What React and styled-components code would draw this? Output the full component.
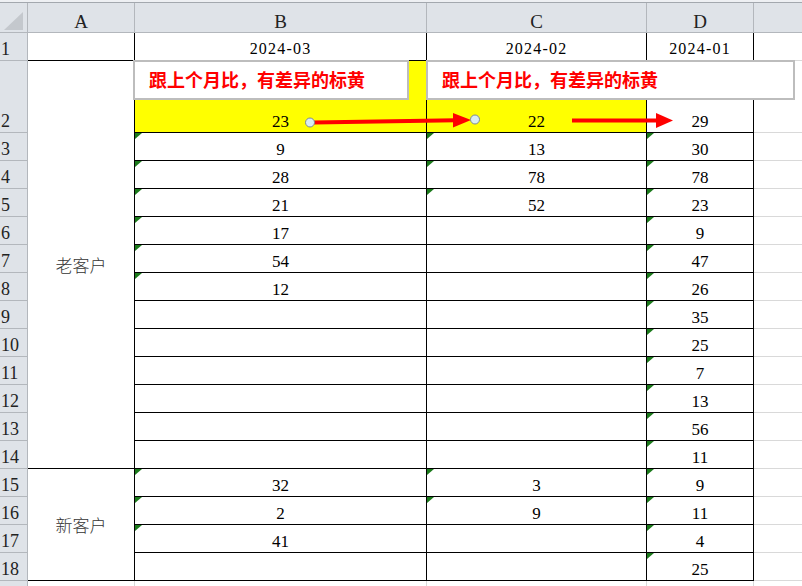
import React from 'react';
import styled, { createGlobalStyle, css } from 'styled-components';

const GlobalStyle = createGlobalStyle`
  html, body { margin: 0; padding: 0; background: #fff; overflow: hidden; }
  * { box-sizing: border-box; }
`;

const LINE = { black: '#000', grid: '#d9d9d9', head: '#b3b7bc' };
const HEAD_BG = '#dfe3e8';

const Sheet = styled.div`
  position: relative;
  width: 802px;
  height: 586px;
  overflow: hidden;
  background: #fff;
`;

const TopStrip = styled.div`
  height: 3px;
  background: #eef0f3;
  border-bottom: 1px solid #a3a8ae;
`;

const Grid = styled.div`
  display: grid;
  grid-template-columns: 28px 107px 292px 220px 107px 100px;
  grid-template-rows: 30px 28px 72px repeat(17, 28px);
`;

const ColHead = styled.div`
  position: relative;
  background: ${HEAD_BG};
  border-right: 1px solid ${LINE.head};
  border-bottom: 1px solid ${LINE.head};
  display: flex;
  justify-content: center;
  align-items: flex-end;
  font: 19px/20px "Liberation Serif", serif;
  color: #222;
  ${(p) =>
    p.$corner &&
    css`
      &::after {
        content: '';
        position: absolute;
        right: 4px;
        bottom: 2px;
        width: 19px;
        height: 18px;
        background: #c4c8cd;
        clip-path: polygon(100% 0, 100% 100%, 0 100%);
      }
    `}
`;

const RowHead = styled.div`
  background: ${HEAD_BG};
  border-right: 1px solid ${LINE.head};
  border-bottom: 1px solid ${LINE.head};
  display: flex;
  align-items: flex-end;
  padding: 0 0 2px 1px;
  font: 18px/18px "Liberation Serif", serif;
  color: #222;
`;

const Cell = styled.div`
  position: relative;
  border-right: 1px solid ${(p) => LINE[p.$right]};
  border-bottom: 1px solid ${(p) => LINE[p.$bottom]};
  background: ${(p) => p.$fill || '#fff'};
  display: flex;
  justify-content: center;
  align-items: flex-end;
  padding-bottom: 2px;
  font: 17px/17px "Liberation Serif", serif;
  color: #000;
  ${(p) => p.$span && css`grid-row: span ${p.$span};`}
  ${(p) =>
    p.$flag &&
    css`
      &::before {
        content: '';
        position: absolute;
        left: 0;
        top: 0;
        width: 7px;
        height: 6px;
        background: #1b7a1b;
        clip-path: polygon(0 0, 100% 0, 0 100%);
      }
    `}
`;

const DateCell = styled(Cell)`
  font: 16px/17px "Liberation Serif", serif;
  letter-spacing: 1.2px;
  padding-bottom: 3px;
`;

const GroupCell = styled(Cell)`
  align-items: center;
  padding: 0;
  font: 17px/1 "Noto Sans CJK SC", sans-serif;
  font-weight: 300;
  color: #333;
`;

const Note = styled.div`
  position: absolute;
  top: 60px;
  left: ${(p) => p.$left}px;
  width: ${(p) => p.$width}px;
  height: 40px;
  border: 2px solid #bdbdbd;
  background: #fff;
  display: flex;
  align-items: center;
  padding: 0 0 2px 14px;
  font: 700 18px/1 "Noto Sans CJK SC", sans-serif;
  color: #ff0000;
  white-space: nowrap;
`;

const Overlay = styled.svg`
  position: absolute;
  left: 0;
  top: 0;
  pointer-events: none;
`;

const B = { 2: 23, 3: 9, 4: 28, 5: 21, 6: 17, 7: 54, 8: 12, 15: 32, 16: 2, 17: 41 };
const C = { 2: 22, 3: 13, 4: 78, 5: 52, 15: 3, 16: 9 };
const D = {
  2: 29, 3: 30, 4: 78, 5: 23, 6: 9, 7: 47, 8: 26, 9: 35, 10: 25, 11: 7,
  12: 13, 13: 56, 14: 11, 15: 9, 16: 11, 17: 4, 18: 25,
};

const NOTE = '跟上个月比，有差异的标黄';

function rowCells(r) {
  const out = [<RowHead key={`h${r}`}>{r < 19 ? r : ''}</RowHead>];
  if (r === 1) {
    out.push(<Cell key="a1" $right="black" $bottom="black" />);
    out.push(<DateCell key="b1" $right="black" $bottom="black">2024-03</DateCell>);
    out.push(<DateCell key="c1" $right="black" $bottom="black">2024-02</DateCell>);
    out.push(<DateCell key="d1" $right="black" $bottom="black">2024-01</DateCell>);
    out.push(<Cell key="e1" $right="grid" $bottom="grid" />);
    return out;
  }
  if (r === 19) {
    ['a', 'b', 'c', 'd', 'e'].forEach((c) =>
      out.push(<Cell key={c + r} $right="grid" $bottom="grid" />)
    );
    return out;
  }
  if (r === 2) {
    out.push(
      <GroupCell key="a2" $span={13} $right="black" $bottom="black">老客户</GroupCell>
    );
  }
  if (r === 15) {
    out.push(
      <GroupCell key="a15" $span={4} $right="black" $bottom="black">新客户</GroupCell>
    );
  }
  const yellow = r === 2 ? '#ffff00' : undefined;
  out.push(
    <Cell key={`b${r}`} $right="black" $bottom="black" $fill={yellow} $flag={r > 2 && B[r] !== undefined}>
      {B[r]}
    </Cell>
  );
  out.push(
    <Cell key={`c${r}`} $right="black" $bottom="black" $fill={yellow} $flag={r > 2 && C[r] !== undefined}>
      {C[r]}
    </Cell>
  );
  out.push(
    <Cell key={`d${r}`} $right="black" $bottom="black" $flag={r > 2 && D[r] !== undefined}>
      {D[r]}
    </Cell>
  );
  out.push(<Cell key={`e${r}`} $right="grid" $bottom="grid" />);
  return out;
}

export default function App() {
  const rows = [];
  for (let r = 1; r <= 19; r++) rows.push(...rowCells(r));
  return (
    <>
      <GlobalStyle />
      <Sheet>
        <TopStrip />
        <Grid>
          <ColHead $corner />
          <ColHead>A</ColHead>
          <ColHead>B</ColHead>
          <ColHead>C</ColHead>
          <ColHead>D</ColHead>
          <ColHead />
          {rows}
        </Grid>
        <Note $left={133} $width={276}>{NOTE}</Note>
        <Note $left={426} $width={369}>{NOTE}</Note>
        <Overlay width="802" height="586" viewBox="0 0 802 586">
          <line x1="314" y1="122.5" x2="456" y2="120.3" stroke="#ff0000" strokeWidth="4" />
          <polygon points="453,113 471,120 453,127.5" fill="#ff0000" />
          <circle cx="310" cy="122.5" r="4.5" fill="#d9edf3" stroke="#7c8a92" strokeWidth="1" />
          <circle cx="475" cy="119.5" r="4.5" fill="#d9edf3" stroke="#7c8a92" strokeWidth="1" />
          <line x1="572" y1="120.5" x2="659" y2="120.5" stroke="#ff0000" strokeWidth="4" />
          <polygon points="656,113 673,120.5 656,128" fill="#ff0000" />
        </Overlay>
      </Sheet>
    </>
  );
}
